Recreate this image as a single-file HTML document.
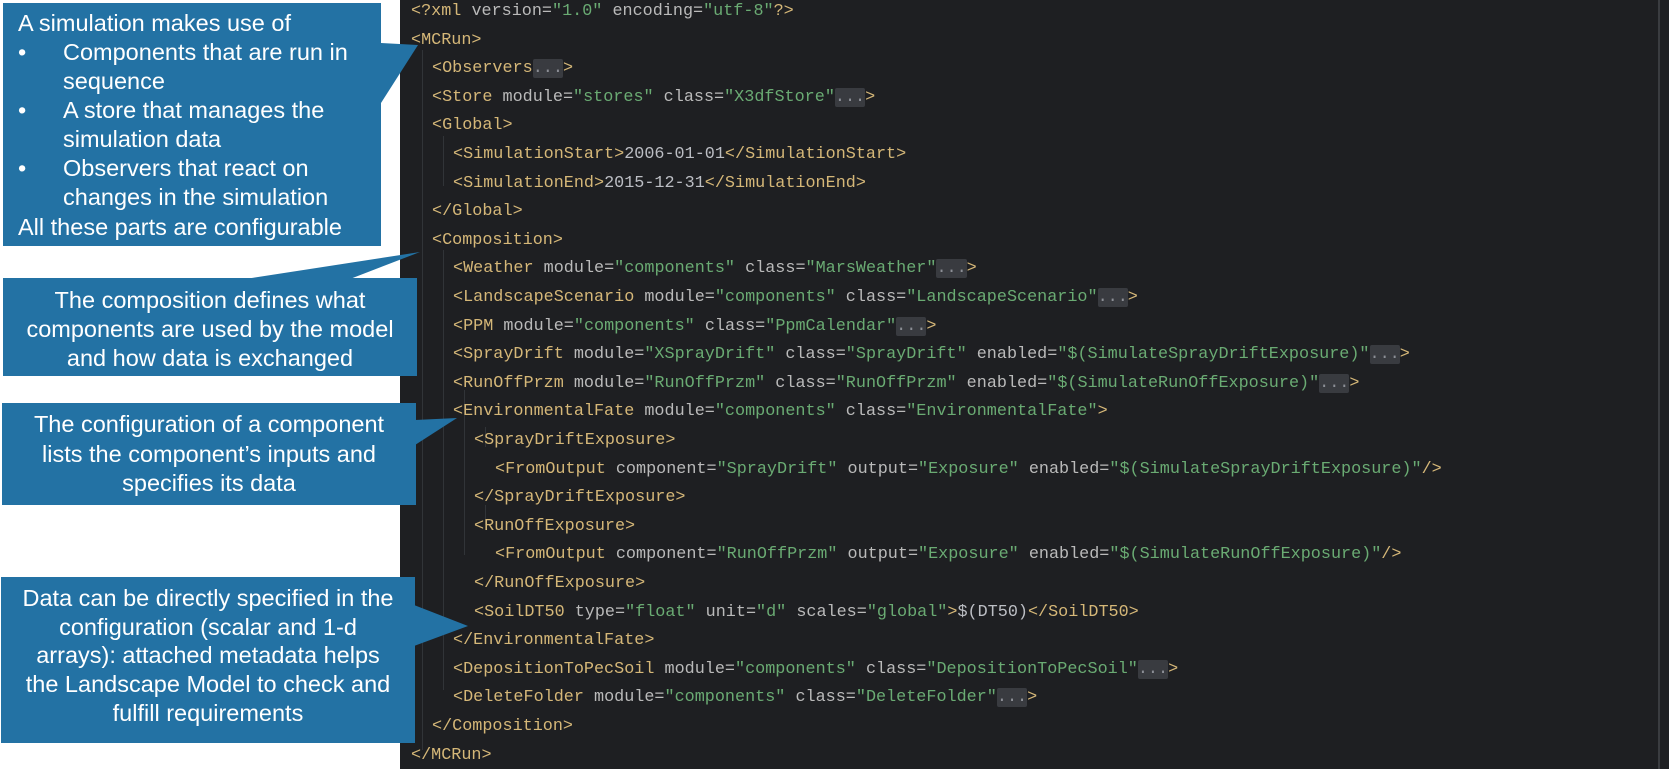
<!DOCTYPE html>
<html><head><meta charset="utf-8"><style>
html,body{margin:0;padding:0;background:#fff;width:1673px;height:776px;overflow:hidden;position:relative;font-family:"Liberation Sans",sans-serif}
#code{position:absolute;left:400px;top:0;width:1269px;height:769px;background:#1e1f22}
.l{position:absolute;white-space:pre;font-family:"Liberation Mono",monospace;font-size:16.8px;line-height:20px;color:#bcbec4}
.t{color:#d5b778}.a{color:#bababa}.v{color:#6aab73}.f{background:#393b40;color:#8c8f96;border-radius:2px}
.box{position:absolute;background:#2372a4;color:#fff}
.tx{position:absolute;white-space:nowrap;color:#fff;font-size:23.5px;line-height:26px}
.g{position:absolute;width:1px;background:#313438}
</style></head><body>
<div id="code">
<div style="position:absolute;right:9px;top:0;width:2px;height:769px;background:#3a3c40"></div>
</div>
<div class="g" style="left:422px;top:50px;height:700px"></div>
<div class="g" style="left:443px;top:136px;height:50px"></div>
<div class="g" style="left:443px;top:250px;height:440px"></div>
<div class="g" style="left:464px;top:390px;height:165px"></div>
<div class="g" style="left:485px;top:427px;height:20px"></div>
<div class="g" style="left:485px;top:505px;height:20px"></div>
<div id="lines"></div>
<svg width="1673" height="776" style="position:absolute;left:0;top:0">
<polygon fill="#2372a4" points="381,43 418,45 381,103"/>
<polygon fill="#2372a4" points="245,279 420,252 350,279"/>
<polygon fill="#2372a4" points="415,420 457,418 415,445"/>
<polygon fill="#2372a4" points="414,605 468,626 414,646"/>
</svg>
<div class="box" style="left:3px;top:3px;width:378px;height:243px"></div>
<div class="box" style="left:3px;top:278px;width:414px;height:98px"></div>
<div class="box" style="left:2px;top:403px;width:414px;height:102px"></div>
<div class="box" style="left:1px;top:577px;width:414px;height:166px"></div>
<div class="tx" style="left:18px;top:10px">A simulation makes use of</div>
<div class="tx" style="left:18px;top:39px">•</div><div class="tx" style="left:63px;top:39px">Components that are run in</div>
<div class="tx" style="left:63px;top:68px">sequence</div>
<div class="tx" style="left:18px;top:97px">•</div><div class="tx" style="left:63px;top:97px">A store that manages the</div>
<div class="tx" style="left:63px;top:126px">simulation data</div>
<div class="tx" style="left:18px;top:155px">•</div><div class="tx" style="left:63px;top:155px">Observers that react on</div>
<div class="tx" style="left:63px;top:184px">changes in the simulation</div>
<div class="tx" style="left:18px;top:214px">All these parts are configurable</div>
<div class="tx" style="left:3px;width:414px;text-align:center;top:287px">The composition defines what</div>
<div class="tx" style="left:3px;width:414px;text-align:center;top:316px">components are used by the model</div>
<div class="tx" style="left:3px;width:414px;text-align:center;top:345px">and how data is exchanged</div>
<div class="tx" style="left:2px;width:414px;text-align:center;top:411px">The configuration of a component</div>
<div class="tx" style="left:2px;width:414px;text-align:center;top:441px">lists the component’s inputs and</div>
<div class="tx" style="left:2px;width:414px;text-align:center;top:470px">specifies its data</div>
<div class="tx" style="left:1px;width:414px;text-align:center;top:585px">Data can be directly specified in the</div>
<div class="tx" style="left:1px;width:414px;text-align:center;top:614px">configuration (scalar and 1-d</div>
<div class="tx" style="left:1px;width:414px;text-align:center;top:642px">arrays): attached metadata helps</div>
<div class="tx" style="left:1px;width:414px;text-align:center;top:671px">the Landscape Model to check and</div>
<div class="tx" style="left:1px;width:414px;text-align:center;top:700px">fulfill requirements</div>
<script>
const T=s=>'<span class="t">'+s+'</span>',A=s=>'<span class="a">'+s+'</span>',V=s=>'<span class="v">'+s+'</span>',F='<span class="f">...</span>';
const at=(n,v)=>' '+A(n+'=')+V('"'+v+'"');
const L=[
[0,T('&lt;?xml')+at('version','1.0')+at('encoding','utf-8')+T('?&gt;')],
[0,T('&lt;MCRun&gt;')],
[1,T('&lt;Observers')+F+T('&gt;')],
[1,T('&lt;Store')+at('module','stores')+at('class','X3dfStore')+F+T('&gt;')],
[1,T('&lt;Global&gt;')],
[2,T('&lt;SimulationStart&gt;')+'2006-01-01'+T('&lt;/SimulationStart&gt;')],
[2,T('&lt;SimulationEnd&gt;')+'2015-12-31'+T('&lt;/SimulationEnd&gt;')],
[1,T('&lt;/Global&gt;')],
[1,T('&lt;Composition&gt;')],
[2,T('&lt;Weather')+at('module','components')+at('class','MarsWeather')+F+T('&gt;')],
[2,T('&lt;LandscapeScenario')+at('module','components')+at('class','LandscapeScenario')+F+T('&gt;')],
[2,T('&lt;PPM')+at('module','components')+at('class','PpmCalendar')+F+T('&gt;')],
[2,T('&lt;SprayDrift')+at('module','XSprayDrift')+at('class','SprayDrift')+at('enabled','$(SimulateSprayDriftExposure)')+F+T('&gt;')],
[2,T('&lt;RunOffPrzm')+at('module','RunOffPrzm')+at('class','RunOffPrzm')+at('enabled','$(SimulateRunOffExposure)')+F+T('&gt;')],
[2,T('&lt;EnvironmentalFate')+at('module','components')+at('class','EnvironmentalFate')+T('&gt;')],
[3,T('&lt;SprayDriftExposure&gt;')],
[4,T('&lt;FromOutput')+at('component','SprayDrift')+at('output','Exposure')+at('enabled','$(SimulateSprayDriftExposure)')+T('/&gt;')],
[3,T('&lt;/SprayDriftExposure&gt;')],
[3,T('&lt;RunOffExposure&gt;')],
[4,T('&lt;FromOutput')+at('component','RunOffPrzm')+at('output','Exposure')+at('enabled','$(SimulateRunOffExposure)')+T('/&gt;')],
[3,T('&lt;/RunOffExposure&gt;')],
[3,T('&lt;SoilDT50')+at('type','float')+at('unit','d')+at('scales','global')+T('&gt;')+'$(DT50)'+T('&lt;/SoilDT50&gt;')],
[2,T('&lt;/EnvironmentalFate&gt;')],
[2,T('&lt;DepositionToPecSoil')+at('module','components')+at('class','DepositionToPecSoil')+F+T('&gt;')],
[2,T('&lt;DeleteFolder')+at('module','components')+at('class','DeleteFolder')+F+T('&gt;')],
[1,T('&lt;/Composition&gt;')],
[0,T('&lt;/MCRun&gt;')]];
let h='';L.forEach((l,i)=>{h+='<div class="l" style="left:'+(411+21*l[0])+'px;top:'+(2+28.6*i).toFixed(1)+'px">'+l[1]+'</div>';});
document.getElementById('lines').innerHTML=h;
</script>
</body></html>
